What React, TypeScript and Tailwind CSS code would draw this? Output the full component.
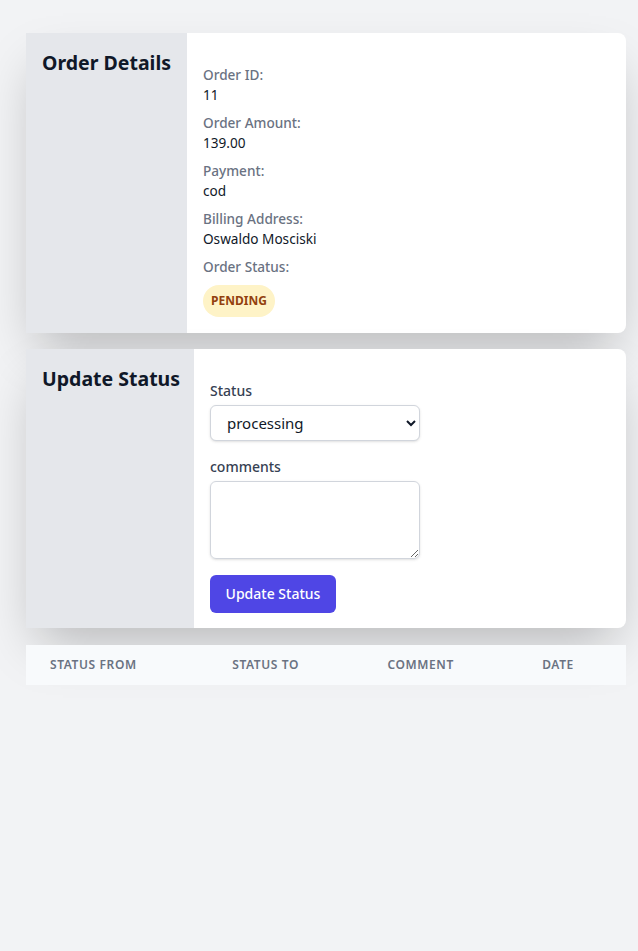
import { useState } from "react";

const font = { fontFamily: '"Noto Sans", "Open Sans", sans-serif' };

const fields = [
  { label: "Order ID:", value: "11" },
  { label: "Order Amount:", value: "139.00" },
  { label: "Payment:", value: "cod" },
  { label: "Billing Address:", value: "Oswaldo Mosciski" },
];

export default function App() {
  const [status, setStatus] = useState("processing");
  const [comment, setComment] = useState("");

  return (
    <div className="min-h-[951px] bg-[#f2f3f5] pl-[26px] pr-3 pt-[33px] text-gray-900" style={font}>
      {/* Order details */}
      <div className="flex rounded-r-lg bg-white shadow-2xl">
        <div className="w-[161px] shrink-0 bg-[#e5e7eb] py-4 pl-4">
          <h2 className="whitespace-nowrap text-[19.5px] font-bold leading-7 text-gray-900">Order Details</h2>
        </div>
        <div className="flex flex-col gap-2 px-4 pb-4 pt-8 text-[13.6px] leading-5">
          {fields.map((f) => (
            <div key={f.label}>
              <div className="font-medium text-gray-500">{f.label}</div>
              <div>{f.value}</div>
            </div>
          ))}
          <div>
            <div className="font-medium text-gray-500">Order Status:</div>
            <span className="mt-2 inline-block rounded-full bg-[#fef3c7] px-2 py-2 text-xs font-bold leading-4 text-[#92400e]">
              PENDING
            </span>
          </div>
        </div>
      </div>

      {/* Update status */}
      <div className="mt-4 flex rounded-r-lg bg-white shadow-2xl">
        <div className="w-[168px] shrink-0 bg-[#e5e7eb] py-4 pl-4">
          <h2 className="whitespace-nowrap text-[19.5px] font-bold leading-7 text-gray-900">Update Status</h2>
        </div>
        <div className="flex flex-col px-4 pb-[15px] pt-8 text-sm">
          <label className="font-medium text-gray-700">Status</label>
          <select
            value={status}
            onChange={(e) => setStatus(e.target.value)}
            className="mt-1 h-9 w-[210px] rounded-md border border-gray-300 bg-white px-3 text-[15px] shadow-sm"
          >
            <option value="pending">pending</option>
            <option value="processing">processing</option>
            <option value="shipped">shipped</option>
            <option value="delivered">delivered</option>
          </select>
          <label className="mt-4 font-medium text-gray-700">comments</label>
          <textarea
            value={comment}
            onChange={(e) => setComment(e.target.value)}
            className="mt-1 h-[78px] w-[210px] rounded-md border border-gray-300 shadow-sm"
          />
          <button className="mt-4 h-[38px] w-[126px] rounded-md bg-[#4f46e5] text-sm font-medium text-white">
            Update Status
          </button>
        </div>
      </div>

      {/* History */}
      <table className="mt-[17px] w-full text-left">
        <thead className="bg-[#f8fafc]">
          <tr className="text-xs font-semibold uppercase tracking-wider text-gray-500">
            <th className="px-6 py-3 font-semibold">Status From</th>
            <th className="px-6 py-3 font-semibold">Status To</th>
            <th className="px-6 py-3 font-semibold">Comment</th>
            <th className="px-6 py-3 font-semibold">Date</th>
          </tr>
        </thead>
        <tbody />
      </table>
    </div>
  );
}
